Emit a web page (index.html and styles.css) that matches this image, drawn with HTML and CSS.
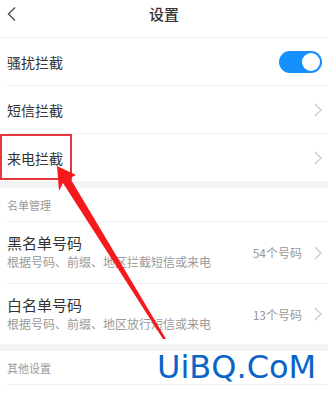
FILE: index.html
```html
<!DOCTYPE html>
<html lang="zh">
<head>
<meta charset="utf-8">
<link rel="stylesheet" href="styles.css">
</head>
<body>
<div class="page">
  <header class="topbar">
    <svg class="back" width="12" height="16" viewBox="0 0 12 16"><path d="M9 1.5 L2.5 8 L9 14.5" fill="none" stroke="#555" stroke-width="1.5"/></svg>
    <div class="title">设置</div>
  </header>

  <div class="row"><span class="label">骚扰拦截</span><span class="toggle"><span class="knob"></span></span></div>
  <div class="row"><span class="label">短信拦截</span><svg class="chev" width="8" height="14" viewBox="0 0 8 14"><path d="M1 1 L7 7 L1 13" fill="none" stroke="#c8c8c8" stroke-width="1.2"/></svg></div>
  <div class="row last"><span class="label">来电拦截</span><svg class="chev" width="8" height="14" viewBox="0 0 8 14"><path d="M1 1 L7 7 L1 13" fill="none" stroke="#c8c8c8" stroke-width="1.2"/></svg></div>

  <div class="gap"></div>
  <div class="section">名单管理</div>

  <div class="row tall">
    <div class="texts"><div class="label">黑名单号码</div><div class="sub">根据号码、前缀、地区拦截短信或来电</div></div>
    <span class="value">54个号码</span>
    <svg class="chev" width="8" height="14" viewBox="0 0 8 14"><path d="M1 1 L7 7 L1 13" fill="none" stroke="#c8c8c8" stroke-width="1.2"/></svg>
  </div>
  <div class="row tall last">
    <div class="texts"><div class="label">白名单号码</div><div class="sub">根据号码、前缀、地区放行短信或来电</div></div>
    <span class="value">13个号码</span>
    <svg class="chev" width="8" height="14" viewBox="0 0 8 14"><path d="M1 1 L7 7 L1 13" fill="none" stroke="#c8c8c8" stroke-width="1.2"/></svg>
  </div>

  <div class="gap"></div>
  <div class="section">其他设置</div>

  <div class="redbox"></div>
  <svg class="arrow" width="328" height="393" viewBox="0 0 328 393"><polygon points="57,166 76,175 70,178 166,339 163,339 63,183 59,191" fill="#f5191c"/></svg>
  <div class="watermark">UiBQ.CoM</div>
</div>
</body>
</html>
```
FILE: styles.css
```css
html, body { margin: 0; padding: 0; background: #fff; }
body { font-family: "Noto Sans CJK SC", "Noto Sans", sans-serif; color: #333; }
.page { position: relative; width: 328px; height: 393px; overflow: hidden; }

.topbar { height: 37px; border-bottom: 1px solid #f0f0f0; display: flex; align-items: flex-start; position: relative; }
.back { position: absolute; left: 6px; top: 6px; }
.title { flex: 1; text-align: center; font-size: 15px; line-height: 20px; padding-top: 4px; color: #333; font-weight: 500; }

.row { margin-left: 7px; padding-right: 6px; height: 47px; border-bottom: 1px solid #eeeeee; display: flex; align-items: center; }
.row.last { border-bottom: none; }
.row.tall { height: 61px; align-items: flex-start; }
.row.tall.last { height: 60px; }
.label { font-size: 14px; line-height: 20px; flex: 1; color: #333; }
.row.tall .label { font-size: 15px; }
.texts { flex: 1; padding-top: 11px; }
.sub { font-size: 12px; line-height: 17px; color: #9a9a9a; }
.value { font-size: 12px; color: #999; margin-right: 12px; align-self: center; }
.row.tall .chev { align-self: center; }
.chev { display: block; margin-right: 0; }

.toggle { width: 43px; height: 22px; border-radius: 11px; background: #1590fd; position: relative; margin-right: 0; }
.knob { position: absolute; right: 2px; top: 2px; width: 18px; height: 18px; border-radius: 50%; background: #fff; }

.gap { height: 7px; background: #f4f4f4; }
.section { margin-left: 7px; height: 33px; border-bottom: 1px solid #eeeeee; display: flex; align-items: center; font-size: 11px; color: #999; }

.redbox { position: absolute; left: 0; top: 134px; width: 72px; height: 46px; box-sizing: border-box; border: 2px solid #e8373c; }
.arrow { position: absolute; left: 0; top: 0; }
.watermark { position: absolute; left: 157px; top: 349px; font-family: "DejaVu Sans", sans-serif; font-size: 32px; line-height: 36px; color: #0a64c8; }
```
